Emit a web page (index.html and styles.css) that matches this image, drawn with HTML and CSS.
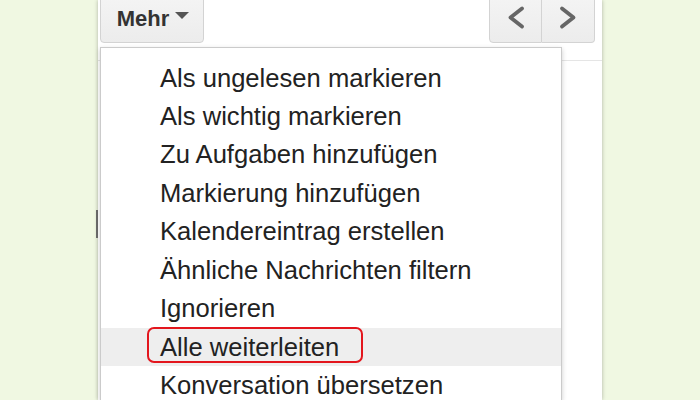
FILE: index.html
```html
<!DOCTYPE html>
<html lang="de">
<head>
<meta charset="utf-8">
<link rel="stylesheet" href="styles.css">
</head>
<body>
<div class="panel">
  <div class="toolbar">
    <div class="btn mehr">
      <span class="label">Mehr</span>
      <svg class="caret" width="14" height="7" viewBox="0 0 14 7"><polygon points="0,0 14,0 7,7" fill="#555"/></svg>
    </div>
    <div class="nav">
      <div class="btn navbtn">
        <svg width="20" height="25" viewBox="0 0 20 25"><polyline points="16,3.5 4.5,12.5 16,21.5" fill="none" stroke="#666" stroke-width="3.8" stroke-linecap="round" stroke-linejoin="round"/></svg>
      </div>
      <div class="btn navbtn right">
        <svg width="20" height="25" viewBox="0 0 20 25"><polyline points="4,3.5 15.5,12.5 4,21.5" fill="none" stroke="#666" stroke-width="3.8" stroke-linecap="round" stroke-linejoin="round"/></svg>
      </div>
    </div>
  </div>
  <div class="edge-mark"></div>
  <ul class="menu">
    <li>Als ungelesen markieren</li>
    <li>Als wichtig markieren</li>
    <li>Zu Aufgaben hinzufügen</li>
    <li>Markierung hinzufügen</li>
    <li>Kalendereintrag erstellen</li>
    <li>Ähnliche Nachrichten filtern</li>
    <li>Ignorieren</li>
    <li class="active marked">Alle weiterleiten</li>
    <li>Konversation übersetzen</li>
  </ul>
</div>
</body>
</html>
```

FILE: styles.css
```css
html, body {
  margin: 0;
  padding: 0;
  height: 100%;
  overflow: hidden;
}

body {
  background: #f0f8e2;
  font-family: "Liberation Sans", Arial, sans-serif;
  color: #222;
}

.panel {
  position: relative;
  margin-left: 98px;
  width: 504px;
  height: 400px;
  background: #fff;
  box-shadow: 0 0 4px rgba(0, 0, 0, 0.28);
}

.toolbar {
  display: flex;
  justify-content: space-between;
  align-items: flex-start;
  height: 61px;
  border-bottom: 1px solid #e5e5e5;
  box-sizing: border-box;
}

.btn {
  box-sizing: border-box;
  height: 48px;
  margin-top: -5px;
  background: linear-gradient(#f4f4f4, #ececec);
  border: 1px solid #d3d3d3;
  border-radius: 4px;
}

.mehr {
  display: flex;
  align-items: flex-start;
  margin-left: 2px;
  width: 104px;
  padding-top: 11.5px;
  padding-left: 15.7px;
}

.mehr .label {
  font-weight: bold;
  font-size: 22px;
  line-height: 22px;
  color: #333;
}

.mehr .caret {
  margin-top: 4px;
  margin-left: 6px;
}

.nav {
  display: flex;
  margin-right: 7px;
}

.navbtn {
  width: 53px;
  display: flex;
  justify-content: center;
  padding-top: 9px;
  border-radius: 4px 0 0 4px;
}

.navbtn.right {
  border-left: none;
  border-radius: 0 4px 4px 0;
}

.edge-mark {
  position: absolute;
  left: -2px;
  top: 210px;
  width: 2px;
  height: 28px;
  background: #6a6a6a;
}

.menu {
  position: absolute;
  left: 2px;
  top: 47px;
  width: 462px;
  height: 353px;
  overflow: hidden;
  box-sizing: border-box;
  margin: 0;
  padding: 10.6px 0 0 0;
  list-style: none;
  background: #fff;
  border: 1px solid #cbcbcb;
  border-bottom: none;
  box-shadow: 0 2px 5px rgba(0, 0, 0, 0.2);
}

.menu li {
  position: relative;
  font-size: 25.6px;
  line-height: 38.43px;
  padding-left: 59px;
  white-space: nowrap;
}

.menu li.active {
  background: #eeeeee;
}

.menu li.marked::before {
  content: "";
  position: absolute;
  left: 46.3px;
  top: -0.3px;
  width: 216px;
  height: 36px;
  box-sizing: border-box;
  border: 2.8px solid #e3161d;
  border-radius: 7px;
}
```
